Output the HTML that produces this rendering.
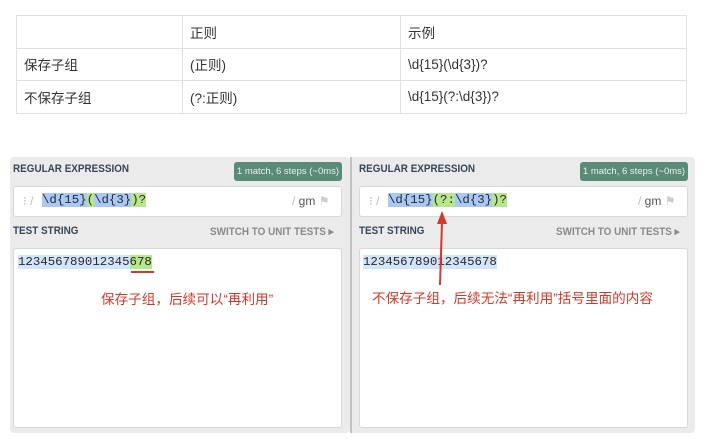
<!DOCTYPE html>
<html><head><meta charset="utf-8"><style>
*{margin:0;padding:0;box-sizing:border-box}
body{width:710px;height:445px;background:#fff;position:relative;overflow:hidden;font-family:"Liberation Sans","Noto Sans CJK SC",sans-serif}
table{position:absolute;left:16px;top:15px;border-collapse:collapse;width:671px;font-size:13.5px;color:#333}
td{border:1px solid #e0e0e0;height:32.5px;padding:0 7px;vertical-align:middle}
.panel{position:absolute;top:157px;height:276px;background:#ebebeb;border-radius:4px}
.h{position:absolute;font-weight:bold;font-size:11px;color:#38455a;transform:scaleX(0.9);transform-origin:left}
.badge{position:absolute;top:162px;height:19px;width:108px;background:#5a8a78;color:#e8f2ee;font-size:9.5px;border-radius:3px;text-align:center;line-height:19px}
.box{position:absolute;background:#fff;border:1px solid #d8d8d8;border-radius:3px}
.mono{font-family:"Liberation Mono",monospace;font-size:12.4px;color:#2a2a2a}
.b{background:#a8c8f5}.g{background:#b8e68a}.lb{background:#d2e5fa}
.sw{position:absolute;font-weight:bold;font-size:11px;color:#8a8a8a;transform:scaleX(0.9);transform-origin:left}
.red{position:absolute;color:#d23a2c;font-size:13.6px;font-family:"Liberation Sans","Noto Sans CJK SC",sans-serif}
.gm{position:absolute;font-size:12px;color:#555}
</style></head><body>
<table>
<tr><td style="width:166px"></td><td style="width:218px">正则</td><td>示例</td></tr>
<tr><td>保存子组</td><td>(正则)</td><td>\d{15}(\d{3})?</td></tr>
<tr><td>不保存子组</td><td>(?:正则)</td><td>\d{15}(?:\d{3})?</td></tr>
</table>

<div class="panel" style="left:10px;width:340px"></div>
<div style="position:absolute;left:350px;top:157px;width:2px;height:276px;background:#c2c2c2"></div>
<div class="panel" style="left:352px;width:343px;border-radius:0 4px 4px 0"></div>

<!-- left -->
<div class="h" style="left:13px;top:163px">REGULAR EXPRESSION</div>
<div class="badge" style="left:234px">1 match, 6 steps (~0ms)</div>
<div class="box" style="left:13px;top:186px;width:329px;height:31px"></div>
<div style="position:absolute;left:23px;top:194px;color:#bbb;font-size:12px">⁝ /</div>
<div class="mono" style="position:absolute;left:42px;top:193px"><span class="b">\d{15}</span><span class="g">(</span><span class="b">\d{3}</span><span class="g">)?</span></div>
<div class="gm" style="left:292px;top:194px"><span style="color:#bbb">/</span> gm <span style="color:#ccc">⚑</span></div>
<div class="h" style="left:13px;top:225px">TEST STRING</div>
<div class="sw" style="left:210px;top:225px">SWITCH TO UNIT TESTS ▸</div>
<div class="box" style="left:13px;top:248px;width:329px;height:180px"></div>
<div class="mono" style="position:absolute;left:18px;top:255px"><span class="lb">123456789012345</span><span class="g">678</span></div>
<div style="position:absolute;left:131px;top:271px;width:23px;height:2px;background:#d23a2c"></div>
<div class="red" style="left:101px;top:288px">保存子组，后续可以“再利用”</div>

<!-- right -->
<div class="h" style="left:359px;top:163px">REGULAR EXPRESSION</div>
<div class="badge" style="left:580px">1 match, 6 steps (~0ms)</div>
<div class="box" style="left:359px;top:186px;width:329px;height:31px"></div>
<div style="position:absolute;left:369px;top:194px;color:#bbb;font-size:12px">⁝ /</div>
<div class="mono" style="position:absolute;left:388px;top:193px"><span class="b">\d{15}</span><span class="g">(?:</span><span class="b">\d{3}</span><span class="g">)?</span></div>
<div class="gm" style="left:638px;top:194px"><span style="color:#bbb">/</span> gm <span style="color:#ccc">⚑</span></div>
<div class="h" style="left:359px;top:225px">TEST STRING</div>
<div class="sw" style="left:556px;top:225px">SWITCH TO UNIT TESTS ▸</div>
<div class="box" style="left:359px;top:248px;width:329px;height:180px"></div>
<div class="mono" style="position:absolute;left:363px;top:255px"><span class="lb">123456789012345678</span></div>
<div class="red" style="left:372px;top:287px">不保存子组，后续无法“再利用”括号里面的内容</div>
<svg style="position:absolute;left:0;top:0" width="710" height="445"><line x1="440" y1="285" x2="442" y2="222" stroke="#d23a2c" stroke-width="2"/><polygon points="442,211 437,224 447,224" fill="#d23a2c"/></svg>
</body></html>
